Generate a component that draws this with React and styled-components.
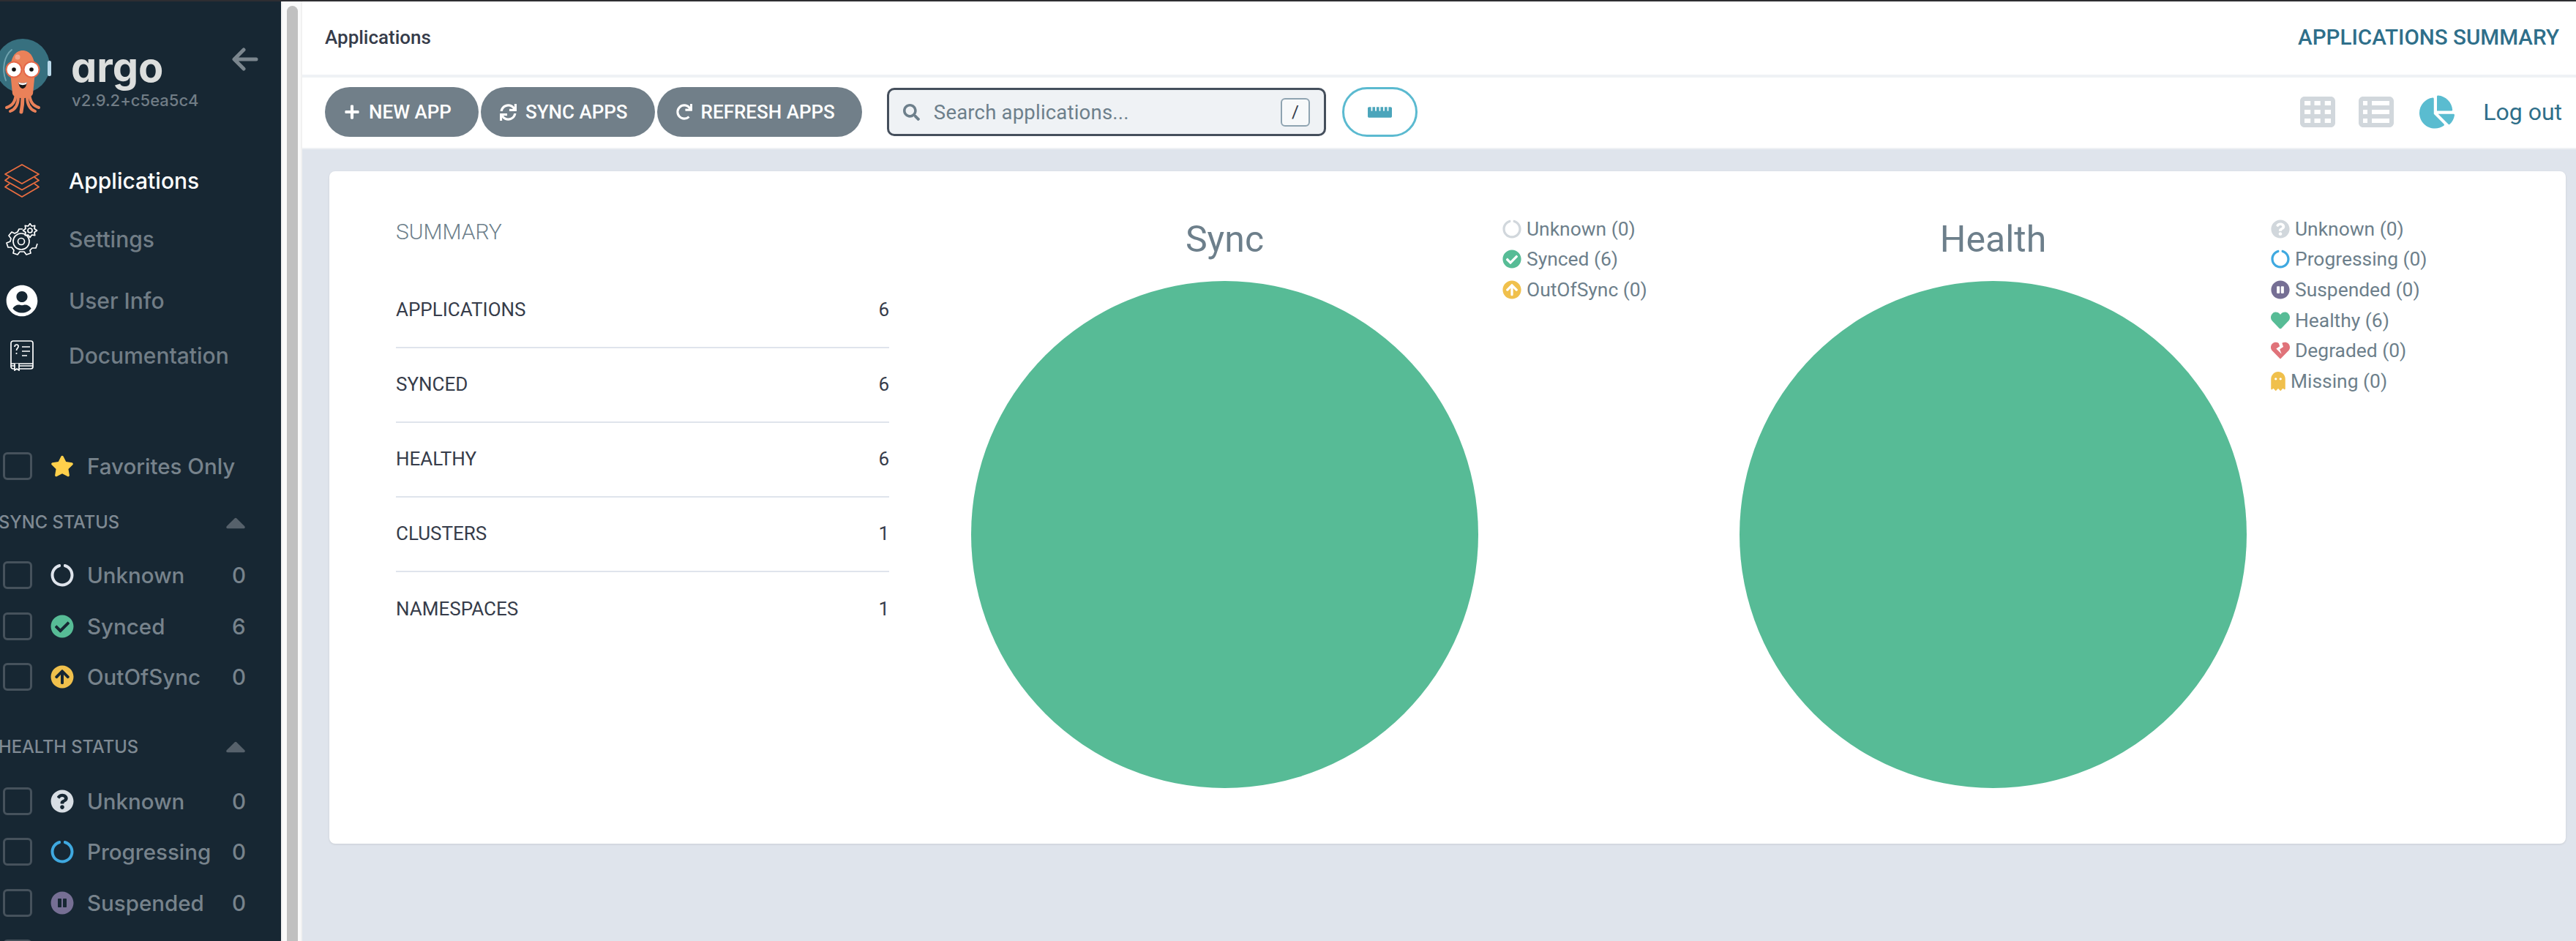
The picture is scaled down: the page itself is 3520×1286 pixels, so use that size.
import styled, { createGlobalStyle } from 'styled-components';
import {
  FaUserCircle, FaStar, FaCheckCircle, FaArrowCircleUp, FaQuestionCircle, FaPauseCircle,
  FaHeart, FaHeartBroken, FaGhost, FaCircleNotch, FaPlus, FaSync, FaRedo, FaSearch,
  FaChartPie, FaRulerHorizontal, FaCaretUp,
} from 'react-icons/fa';
import { FaTableCells, FaTableList } from 'react-icons/fa6';

const GlobalStyle = createGlobalStyle`
  html, body { margin: 0; padding: 0; height: 100%; overflow: hidden; background: #fff; }
  * { box-sizing: border-box; }
`;

const Page = styled.div`
  width: 3520px;
  height: 1286px;
  display: flex;
  flex-direction: column;
  overflow: hidden;
  font-family: Roboto, "Liberation Sans", sans-serif;
`;
const WindowEdge = styled.div`
  height: 2px;
  flex: none;
  background: #2e2e32;
`;
const Body = styled.div`
  flex: 1;
  min-height: 0;
  display: flex;
`;

const Sidebar = styled.aside`
  width: 384px;
  flex: none;
  background: #172733;
  overflow: hidden;
  font-family: Inter, Roboto, sans-serif;
`;
const LogoRow = styled.div`
  height: 205px;
  display: flex;
  align-items: flex-start;
  padding-right: 31px;
`;
const Octopus = styled.svg`
  width: 80px;
  height: 110px;
  flex: none;
  margin: 46px 0 0 -6px;
`;
const Brand = styled.div`
  margin: 62px 0 0 23px;
  display: flex;
  flex-direction: column;
`;
const BrandName = styled.div`
  font-size: 56px;
  line-height: 56px;
  font-weight: 700;
  color: #dcdedd;
  font-feature-settings: "cv11" 1;
`;
const Version = styled.div`
  font-size: 22px;
  line-height: 30px;
  margin: 2px 0 0 1px;
  font-weight: 500;
  color: #717d86;
  white-space: nowrap;
`;
const BackArrow = styled.svg`
  width: 36px;
  height: 32px;
  margin: 63px 0 0 auto;
  flex: none;
`;

const NavItem = styled.div`
  height: ${(p) => p.$h}px;
  display: flex;
  align-items: center;
`;
const NavIcon = styled.div`
  width: 60px;
  margin-right: 34px;
  display: flex;
  justify-content: center;
  color: #fff;
`;
const NavLabel = styled.span`
  font-size: 30px;
  font-weight: 500;
  color: ${(p) => (p.$active ? '#ffffff' : '#717d86')};
`;

const FilterRow = styled.div`
  height: 69.5px;
  display: flex;
  align-items: center;
  padding-left: 4px;
  margin-top: ${(p) => p.$top || 0}px;
  font-size: 29.5px;
  font-weight: 500;
  color: #77838c;
`;
const Checkbox = styled.div`
  width: 40px;
  height: 38px;
  flex: none;
  margin-right: 25px;
  border: 3px solid #46525c;
  border-radius: 6px;
`;
const FilterIcon = styled.div`
  width: 32px;
  flex: none;
  margin-right: 18px;
  display: flex;
  justify-content: center;
  color: ${(p) => p.$color};
`;
const FilterLabel = styled.span`
  width: 198px;
  flex: none;
  white-space: nowrap;
`;
const SectionTitle = styled.div`
  height: 40px;
  margin: ${(p) => p.$top}px 40px ${(p) => p.$bottom}px -2px;
  display: flex;
  align-items: center;
  justify-content: space-between;
  font-size: 23.7px;
  font-weight: 500;
  color: #7f8a93;
  white-space: nowrap;
  svg { color: #56616b; }
`;

const Gutter = styled.div`
  width: 29px;
  flex: none;
  background: #fafafa;
  border-left: 2px solid #f1f1f1;
  border-right: 2px solid #f1f1f1;
  padding: 6px 4px 0 6px;
`;
const Thumb = styled.div`
  height: 100%;
  background: #c0c0c0;
  border-radius: 8px 8px 0 0;
`;

const Main = styled.main`
  flex: 1;
  min-width: 0;
  display: flex;
  flex-direction: column;
  background: #dfe4ec;
`;
const TopBar = styled.header`
  height: 104px;
  flex: none;
  background: #fff;
  border-bottom: 4px solid #eff2f5;
  display: flex;
  align-items: center;
  justify-content: space-between;
  padding: 0 23px 3px 31px;
`;
const Crumb = styled.div`
  font-size: 26px;
  font-weight: 500;
  color: #363c4a;
`;
const PageTitle = styled.div`
  font-size: 29.6px;
  font-weight: 500;
  color: #2f6f8a;
`;
const Toolbar = styled.div`
  height: 98px;
  flex: none;
  background: #fff;
  border-bottom: 2px solid #eef1f4;
  display: flex;
  align-items: center;
  padding: 0 19px 2px 31px;
`;
const Actions = styled.div`
  display: flex;
  gap: 3px;
`;
const ActionButton = styled.button`
  height: 68px;
  padding: 0 37px 0 26px;
  border: none;
  border-radius: 34px;
  background: #717f89;
  color: #fff;
  font: 500 26px Roboto, sans-serif;
  display: flex;
  align-items: center;
  gap: 12px;
  white-space: nowrap;
`;
const SearchBox = styled.div`
  width: 600px;
  height: 66px;
  margin-left: 34px;
  padding: 0 19px 0 19px;
  background: #eff2f5;
  border: 3px solid #454f5c;
  border-radius: 10px;
  display: flex;
  align-items: center;
  gap: 19px;
  color: #6d7f8b;
  font-size: 27.5px;
`;
const SearchText = styled.span`
  flex: 1;
  letter-spacing: 0.2px;
`;
const SlashKey = styled.kbd`
  width: 40px;
  height: 39px;
  border: 2px solid #8fa4b1;
  border-radius: 6px;
  background: #f7f9fa;
  color: #363c4a;
  font: 400 24px Roboto, sans-serif;
  display: flex;
  align-items: center;
  justify-content: center;
`;
const PillButton = styled.button`
  width: 103px;
  height: 68px;
  margin-left: 22px;
  background: #fff;
  border: 3px solid #5bbad0;
  border-radius: 34px;
  color: #4ba5bb;
  display: flex;
  align-items: center;
  justify-content: center;
`;
const ViewSwitch = styled.div`
  margin-left: auto;
  display: flex;
  align-items: center;
`;
const ViewIcon = styled.div`
  display: flex;
  margin-right: ${(p) => p.$gap}px;
  color: ${(p) => (p.$active ? '#5abcd0' : '#d1d7dc')};
`;
const LogOut = styled.span`
  font-size: 32px;
  color: #2f6f8a;
`;

const Content = styled.div`
  flex: 1;
  min-height: 0;
  padding: 30px 14px 0 37px;
`;
const Card = styled.section`
  height: 919px;
  background: #fff;
  border-radius: 8px;
  box-shadow: 0 1px 3px rgba(0, 0, 0, 0.1);
  display: flex;
  padding-left: 91px;
`;
const Summary = styled.div`
  width: 674px;
  flex: none;
  margin-right: 112px;
`;
const SummaryTitle = styled.div`
  font-size: 30px;
  font-weight: 300;
  line-height: 40px;
  margin: 63px 0 37px;
  color: #6d7f8b;
`;
const SummaryRow = styled.div`
  height: 102px;
  padding-bottom: 2px;
  display: flex;
  align-items: center;
  justify-content: space-between;
  font-size: 26px;
  font-weight: 400;
  color: #363c4a;
  border-bottom: ${(p) => (p.$last ? 'none' : '2px solid #dfe4ec')};
`;
const ChartBlock = styled.div`
  width: 1050px;
  flex: none;
  display: flex;
  gap: 33px;
`;
const PieColumn = styled.div`
  width: 693px;
  flex: none;
  display: flex;
  flex-direction: column;
  align-items: center;
`;
const ChartTitle = styled.div`
  height: 150px;
  line-height: 60px;
  padding-top: 63px;
  font-size: 50px;
  font-weight: 400;
  color: #6d7f8b;
`;
const Pie = styled.svg`
  width: 693px;
  height: 693px;
  display: block;
`;
const Legend = styled.ul`
  list-style: none;
  margin: 0;
  padding: 58px 0 0;
`;
const LegendItem = styled.li`
  height: 41.6px;
  display: flex;
  align-items: center;
  gap: 7px;
  font-size: 26.4px;
  color: #6d7f8b;
  white-space: nowrap;
`;
const LegendIcon = styled.span`
  display: flex;
  width: ${(p) => p.$width}px;
  color: ${(p) => p.$color};
  svg { width: 100%; }
`;

const syncFilters = [
  { label: 'Unknown', count: 0, Icon: FaCircleNotch, color: '#dfe4ec' },
  { label: 'Synced', count: 6, Icon: FaCheckCircle, color: '#57bc96' },
  { label: 'OutOfSync', count: 0, Icon: FaArrowCircleUp, color: '#f0c04c' },
];
const healthFilters = [
  { label: 'Unknown', count: 0, Icon: FaQuestionCircle, color: '#d8dee4' },
  { label: 'Progressing', count: 0, Icon: FaCircleNotch, color: '#3fa9e0' },
  { label: 'Suspended', count: 0, Icon: FaPauseCircle, color: '#766f94' },
  { label: 'Healthy', count: 6, Icon: FaHeart, color: '#57bc96' },
];
const summaryRows = [
  ['APPLICATIONS', 6], ['SYNCED', 6], ['HEALTHY', 6], ['CLUSTERS', 1], ['NAMESPACES', 1],
];
const syncLegend = [
  { label: 'Unknown (0)', Icon: FaCircleNotch, color: '#d1d7dc' },
  { label: 'Synced (6)', Icon: FaCheckCircle, color: '#57bc96' },
  { label: 'OutOfSync (0)', Icon: FaArrowCircleUp, color: '#f0c04c' },
];
const healthLegend = [
  { label: 'Unknown (0)', Icon: FaQuestionCircle, color: '#d1d7dc' },
  { label: 'Progressing (0)', Icon: FaCircleNotch, color: '#3fa9e0' },
  { label: 'Suspended (0)', Icon: FaPauseCircle, color: '#766f94' },
  { label: 'Healthy (6)', Icon: FaHeart, color: '#57bc96' },
  { label: 'Degraded (0)', Icon: FaHeartBroken, color: '#e0737a' },
  { label: 'Missing (0)', Icon: FaGhost, color: '#f0c04c', width: 20 },
];

function OctopusLogo() {
  return (
    <Octopus viewBox="0 0 80 110">
      <circle cx="37" cy="42" r="37" fill="#37707f" />
      <rect x="71" y="35" width="5" height="21" rx="2" fill="#b9d9ea" />
      <path d="M14 62C8 46 12 28 22 20" fill="none" stroke="#6fa2ae" strokeWidth="2" strokeLinecap="round" />
      <g fill="none" stroke="#ea8159" strokeLinecap="round">
        <path d="M28 80C27 90 24 96 15 99" strokeWidth="4" />
        <path d="M31 84C31 94 28 101 20 104" strokeWidth="4" />
        <path d="M37 84C37 94 36 100 35 105" strokeWidth="5" />
        <path d="M43 84C43 94 46 101 54 104" strokeWidth="4" />
        <path d="M46 80C47 90 50 96 59 99" strokeWidth="4" />
      </g>
      <path d="M20 50C20 30 27 21 37 21C47 21 54 30 54 50L51 80C49 88 25 88 23 80Z" fill="#ea8159" />
      <circle cx="25" cy="47" r="10.5" fill="#fff" stroke="#e4694a" strokeWidth="2" />
      <circle cx="49" cy="47" r="10.5" fill="#fff" stroke="#e4694a" strokeWidth="2" />
      <circle cx="25" cy="47" r="2.8" fill="#111" />
      <circle cx="49" cy="47" r="2.8" fill="#111" />
      <circle cx="30" cy="30" r="3.5" fill="#f2a78d" />
      <path d="M31 64C34 66 40 66 43 64C42 71 39 73 37 73C35 73 32 71 31 64Z" fill="#1a1a1a" />
      <path d="M31 64C34 66 40 66 43 64L42 67C39 68.5 35 68.5 32 67Z" fill="#fff" />
    </Octopus>
  );
}

function LayersIcon() {
  return (
    <svg width="48" height="48" viewBox="0 0 48 48" fill="none" stroke="#e96d40" strokeWidth="1.8" strokeLinejoin="round">
      <path d="M24 2 47 15 24 28 1 15Z" />
      <path d="M7 19 1 23.5 24 36.5 47 23.5 41 19" />
      <path d="M7 28 1 32.5 24 46 47 32.5 41 28" />
    </svg>
  );
}

function GearsIcon() {
  const gear = (cx, cy, r1, r2, n) => {
    const pts = [];
    for (let i = 0; i < n * 2; i++) {
      const a = (Math.PI * i) / n;
      const r = i % 2 ? r1 : r2;
      pts.push(`${(cx + r * Math.cos(a)).toFixed(1)},${(cy + r * Math.sin(a)).toFixed(1)}`);
    }
    return pts.join(' ');
  };
  return (
    <svg width="44" height="44" viewBox="0 0 44 44" fill="none" stroke="#fff" strokeWidth="1.7" strokeLinejoin="round">
      <path d="M23 8 18 8 16 12 12 14 8 12 4 17 7 21 6 25 1 27 3 33 8 33 11 37 10 41 16 43 19 39 25 39 28 43 34 41 33 37 36 34 41 34 43 28" />
      <circle cx="21" cy="25" r="11" />
      <circle cx="21" cy="25" r="4.5" />
      <polygon points={gear(33, 10, 6.5, 9.5, 8)} fill="#172733" />
      <circle cx="33" cy="10" r="3" />
    </svg>
  );
}

function BookIcon() {
  return (
    <svg width="32" height="42" viewBox="0 0 32 42" fill="none" stroke="#fff" strokeWidth="1.7">
      <rect x="1" y="1" width="30" height="38" rx="3" />
      <path d="M1 32H31M1 35H31" />
      <path d="M6 32V41L9 39 12 41V32" fill="#172733" />
      <path d="M16 9H27M16 15H27M16 21H23" />
      <path d="M6 9C6 5 12 5 11 9C10.500 11 8.500 11 8.500 14M8.500 17V19" />
    </svg>
  );
}

function Filter({ label, count, Icon, color, size = 32 }) {
  return (
    <FilterRow>
      <Checkbox />
      <FilterIcon $color={color}><Icon size={size} /></FilterIcon>
      <FilterLabel>{label}</FilterLabel>
      <span>{count}</span>
    </FilterRow>
  );
}

function Chart({ title, legend }) {
  return (
    <ChartBlock>
      <PieColumn>
        <ChartTitle>{title}</ChartTitle>
        <Pie viewBox="0 0 693 693"><circle cx="346.500" cy="346.500" r="346.500" fill="#57bb96" /></Pie>
      </PieColumn>
      <Legend>
        {legend.map(({ label, Icon, color, width = 26 }) => (
          <LegendItem key={label}>
            <LegendIcon $color={color} $width={width}><Icon size={26} /></LegendIcon>
            {label}
          </LegendItem>
        ))}
      </Legend>
    </ChartBlock>
  );
}

export default function App() {
  return (
    <Page>
      <GlobalStyle />
      <WindowEdge />
      <Body>
        <Sidebar>
          <LogoRow>
            <OctopusLogo />
            <Brand>
              <BrandName>argo</BrandName>
              <Version>v2.9.2+c5ea5c4</Version>
            </Brand>
            <BackArrow viewBox="0 0 36 32" fill="none" stroke="#7b868e" strokeWidth="5" strokeLinecap="round" strokeLinejoin="round">
              <path d="M33 16H4M16 3 3 16 16 29" />
            </BackArrow>
          </LogoRow>
          <NavItem $h={80}><NavIcon><LayersIcon /></NavIcon><NavLabel $active>Applications</NavLabel></NavItem>
          <NavItem $h={80}><NavIcon><GearsIcon /></NavIcon><NavLabel>Settings</NavLabel></NavItem>
          <NavItem $h={88}><NavIcon><FaUserCircle size={44} /></NavIcon><NavLabel>User Info</NavLabel></NavItem>
          <NavItem $h={62}><NavIcon><BookIcon /></NavIcon><NavLabel>Documentation</NavLabel></NavItem>

          <FilterRow $top={85}>
            <Checkbox />
            <FilterIcon $color="#ffd04b"><FaStar size={34} /></FilterIcon>
            <FilterLabel>Favorites Only</FilterLabel>
          </FilterRow>
          <SectionTitle $top={22} $bottom={18}>SYNC STATUS<FaCaretUp size={44} /></SectionTitle>
          {syncFilters.map((f) => <Filter key={f.label} {...f} />)}
          <SectionTitle $top={40} $bottom={20}>HEALTH STATUS<FaCaretUp size={44} /></SectionTitle>
          {healthFilters.map((f) => <Filter key={f.label} {...f} />)}
        </Sidebar>
        <Gutter><Thumb /></Gutter>
        <Main>
          <TopBar>
            <Crumb>Applications</Crumb>
            <PageTitle>APPLICATIONS SUMMARY</PageTitle>
          </TopBar>
          <Toolbar>
            <Actions>
              <ActionButton><FaPlus size={22} />NEW APP</ActionButton>
              <ActionButton><FaSync size={23} />SYNC APPS</ActionButton>
              <ActionButton><FaRedo size={22} />REFRESH APPS</ActionButton>
            </Actions>
            <SearchBox>
              <FaSearch size={23} />
              <SearchText>Search applications...</SearchText>
              <SlashKey>/</SlashKey>
            </SearchBox>
            <PillButton><FaRulerHorizontal size={33} /></PillButton>
            <ViewSwitch>
              <ViewIcon $gap={32}><FaTableCells size={48} /></ViewIcon>
              <ViewIcon $gap={35}><FaTableList size={48} /></ViewIcon>
              <ViewIcon $gap={39} $active><FaChartPie size={48} /></ViewIcon>
              <LogOut>Log out</LogOut>
            </ViewSwitch>
          </Toolbar>
          <Content>
            <Card>
              <Summary>
                <SummaryTitle>SUMMARY</SummaryTitle>
                {summaryRows.map(([label, value], i) => (
                  <SummaryRow key={label} $last={i === summaryRows.length - 1}>
                    <span>{label}</span>
                    <span>{value}</span>
                  </SummaryRow>
                ))}
              </Summary>
              <Chart title="Sync" legend={syncLegend} />
              <Chart title="Health" legend={healthLegend} />
            </Card>
          </Content>
        </Main>
      </Body>
    </Page>
  );
}
